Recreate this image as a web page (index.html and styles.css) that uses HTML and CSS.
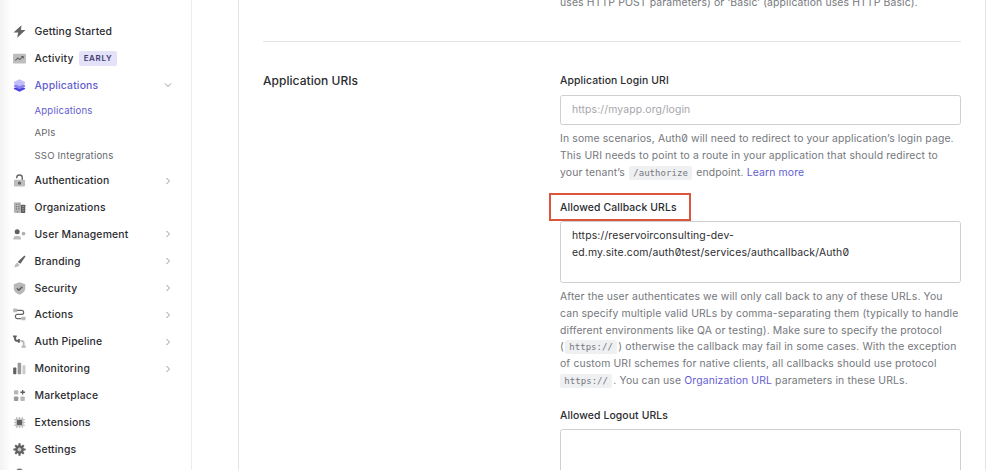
FILE: index.html
```html
<!DOCTYPE html>
<html lang="en">
<head>
<meta charset="utf-8">
<title>Application Settings</title>
<link rel="stylesheet" href="styles.css">
</head>
<body>
<div class="app">
  <nav class="sidebar">
    <a class="item"><svg class="icon" viewBox="0 0 14 14"><path d="M9.2.3.5 8.200h5L4.600 13.700 13.500 5.500H8.500z" fill="#656565"/></svg><span>Getting Started</span></a>
    <a class="item"><svg class="icon" viewBox="0 0 14 14"><rect y="2" width="14" height="10.4" rx="1" fill="#bdbdbd"/><path d="m2.5 9 2.7-2.5 2 1.6 3.6-3M8.7 4.8h2.4V7" fill="none" stroke="#666" stroke-width="1.1"/></svg><span>Activity</span><b class="badge">EARLY</b></a>
    <a class="item active"><svg class="icon" viewBox="0 0 14 14"><path d="m1 9.7 6-2 6 2v1.2L7 13.7l-6-2.8z" fill="#4b42e2"/><path d="m1 6.5 6-2 6 2v1.6L7 11 1 8.1z" fill="#8983f1"/><path d="m1 3.2 6-2.8 6 2.8v1.6L7 7.7 1 4.8z" fill="#c1bdf8"/></svg><span>Applications</span><svg class="chev" viewBox="0 0 8 8"><path d="m1 2.5 3 3 3-3"/></svg></a>
    <div class="sub">
      <a class="active">Applications</a>
      <a>APIs</a>
      <a>SSO Integrations</a>
    </div>
    <a class="item"><svg class="icon" viewBox="0 0 14 14"><path d="M4 4.500V4q0-3 3-3t3 3v2.500" fill="none" stroke="#666" stroke-width="1.5"/><rect x="1" y="6.200" width="12" height="7.300" rx="1" fill="#bdbdbd"/><circle cx="7" cy="9.800" r="1.800" fill="#666"/></svg><span>Authentication</span><svg class="chev" viewBox="0 0 8 8"><path d="m2.5 1 3 3-3 3"/></svg></a>
    <a class="item"><svg class="icon" viewBox="0 0 14 14"><path d="M1 1.5h7.5v11.3H1z" fill="#b5b5b5"/><path d="M3 3.5h1.300M5.700 3.500H7M3 6h1.300M5.700 6H7M3 8.500h1.300M5.700 8.500H7M4 11.600h1.500" stroke="#777" stroke-width="1.2"/><rect x="8.500" y="4" width="4.700" height="8.800" rx=".5" fill="#606060"/><path d="M10 6h1.700M10 8.300h1.700M10 10.600h1.700" stroke="#aaa"/></svg><span>Organizations</span></a>
    <a class="item"><svg class="icon" viewBox="0 0 14 14"><circle cx="4.500" cy="4" r="2.700" fill="#606060"/><path d="M.5 12.500V11q0-2.500 2.500-2.500h3Q8.600 8.500 8.600 11v1.500z" fill="#bdbdbd"/><circle cx="11.300" cy="6" r="2" fill="#b0b0b0"/></svg><span>User Management</span><svg class="chev" viewBox="0 0 8 8"><path d="m2.5 1 3 3-3 3"/></svg></a>
    <a class="item"><svg class="icon" viewBox="0 0 14 14"><path d="M12 .8q1.700-.5 1.200 1.200L8 9.500 5 7.600z" fill="#606060"/><path d="M4.400 8.400 7 10.300q-.5 3.200-6.300 3 1.400-.8 1.500-2.300.2-2 2.200-2.600z" fill="#bdbdbd"/></svg><span>Branding</span><svg class="chev" viewBox="0 0 8 8"><path d="m2.5 1 3 3-3 3"/></svg></a>
    <a class="item"><svg class="icon" viewBox="0 0 14 14"><path d="m7 .4 6.200 2v4.300q0 4.500-6.200 7Q.8 11.200.8 6.700V2.400z" fill="#b8b8b8"/><path d="m4.200 6.800 2 2L10 5" fill="none" stroke="#5b5b5b" stroke-width="1.5"/></svg><span>Security</span><svg class="chev" viewBox="0 0 8 8"><path d="m2.5 1 3 3-3 3"/></svg></a>
    <a class="item"><svg class="icon" viewBox="0 0 14 14"><path d="M4 2.600h5.300a2.100 2.100 0 0 1 0 4.300H4.300a2.300 2.300 0 0 0 0 4.500H9" fill="none" stroke="#666" stroke-width="1.3"/><rect x=".2" y=".6" width="4.200" height="4" rx=".7" fill="#b8b8b8"/><rect x="9" y="9.300" width="4.500" height="4" rx=".7" fill="#b8b8b8"/></svg><span>Actions</span><svg class="chev" viewBox="0 0 8 8"><path d="m2.5 1 3 3-3 3"/></svg></a>
    <a class="item"><svg class="icon" viewBox="0 0 14 14"><path d="M0 1.500h4M2.200 1v3q0 2.300 2.500 2.300H6M6.300 4.200v4.200" fill="none" stroke="#606060" stroke-width="2.1"/><path d="M7.800 6.300h1.500q2.200 0 2.200 2.500v4M9.200 12.700h4.500" fill="none" stroke="#b8b8b8" stroke-width="2"/></svg><span>Auth Pipeline</span><svg class="chev" viewBox="0 0 8 8"><path d="m2.5 1 3 3-3 3"/></svg></a>
    <a class="item"><svg class="icon" viewBox="0 0 14 14"><rect x=".2" y="6" width="3.400" height="7.300" rx=".8" fill="#606060"/><rect x="5" y=".7" width="3.800" height="12.600" rx=".8" fill="#999"/><rect x="10.200" y="3.600" width="3.200" height="9.700" rx=".8" fill="#c9c9c9"/></svg><span>Monitoring</span><svg class="chev" viewBox="0 0 8 8"><path d="m2.5 1 3 3-3 3"/></svg></a>
    <a class="item"><svg class="icon" viewBox="0 0 14 14"><rect x="1" y="1.300" width="4.700" height="4.700" rx=".8" fill="#b8b8b8"/><rect x="1" y="8.200" width="4.700" height="4.700" rx=".8" fill="#999"/><rect x="8" y="8.200" width="4.700" height="4.700" rx=".8" fill="#b8b8b8"/><path d="M10.400 1v5M7.900 3.500h5" stroke="#606060" stroke-width="1.5"/></svg><span>Marketplace</span></a>
    <a class="item"><svg class="icon" viewBox="0 0 14 14"><path d="M4 1v12M7 1v12M10 1v12M1 4h12M1 7h12M1 10h12" stroke="#bbb" stroke-width="1.2"/><rect x="2.700" y="2.700" width="8.600" height="8.600" rx="1" fill="#bdbdbd"/><rect x="4.300" y="4.300" width="5.400" height="5.400" rx=".7" fill="#606060"/></svg><span>Extensions</span></a>
    <a class="item"><svg class="icon" viewBox="0 0 14 14"><circle cx="7" cy="7" r="4.700" fill="#606060"/><path d="M7 .4v13.200M.4 7h13.200M2.400 2.400l9.200 9.200M11.600 2.400l-9.200 9.200" stroke="#606060" stroke-width="2.3"/><circle cx="7" cy="7" r="2.100" fill="#c5c5c5"/></svg><span>Settings</span></a>
    <a class="item last"><svg class="icon" viewBox="0 0 14 14"><circle cx="7" cy="5" r="4.500" fill="#777"/></svg></a>
  </nav>
  <main class="content">
    <section class="card">
      <p class="help top">uses HTTP POST parameters) or ‘Basic’ (application uses HTTP Basic).</p>
      <div class="section">
        <h2>Application URIs</h2>
        <div class="fields">
          <label class="label">Application Login URI</label>
          <div class="input placeholder">https://myapp.org/login</div>
          <p class="help note">In some scenarios, Auth0 will need to redirect to your application’s login page.<br>This URI needs to point to a route in your application that should redirect to<br>your tenant’s <code>/authorize</code> endpoint. <a>Learn more</a></p>
          <label class="label"><span class="marked">Allowed Callback URLs</span></label>
          <div class="input area">https://reservoirconsulting-dev-<br>ed.my.site.com/auth0test/services/authcallback/Auth0</div>
          <p class="help note">After the user authenticates we will only call back to any of these URLs. You<br>can specify multiple valid URLs by comma-separating them (typically to handle<br>different environments like QA or testing). Make sure to specify the protocol<br>(<code>https://</code>) otherwise the callback may fail in some cases. With the exception<br>of custom URI schemes for native clients, all callbacks should use protocol<br><code class="flush">https://</code>. You can use <a>Organization URL</a> parameters in these URLs.</p>
          <label class="label">Allowed Logout URLs</label>
          <div class="input area"></div>
        </div>
      </div>
    </section>
  </main>
</div>
</body>
</html>
```
FILE: styles.css
```css
*, *::before { box-sizing: border-box; }
body {
  margin: 0;
  height: 470px;
  overflow: hidden;
  background: #fff;
  color: #2b2c30;
  font-family: Inter, "Liberation Sans", sans-serif;
  font-feature-settings: "zero";
}
.app { display: flex; height: 470px; }
.sidebar {
  flex: none;
  width: 192px;
  height: 470px;
  overflow: hidden;
  padding: 18px 19px 0 13px;
  border-right: 1px solid #ececec;
  background: linear-gradient(90deg, #f2f2f2 0, #fff 11px);
}
.item {
  display: flex;
  align-items: center;
  height: 26.85px;
  font-size: 10.4px;
  font-weight: 500;
  letter-spacing: .17px;
  white-space: nowrap;
}
.last { align-items: flex-start; padding-top: 5px; }
.icon { flex: none; width: 13px; height: 13px; margin-right: 8.5px; }
.active { color: #635dd0; }
.badge {
  margin-left: 5.5px;
  padding: 0 4.5px;
  height: 15px;
  border-radius: 2px;
  background: #e4e2f8;
  color: #3f3b70;
  font-size: 8px;
  line-height: 15px;
  font-weight: 600;
  letter-spacing: .65px;
}
.chev { width: 8px; height: 8px; margin-left: auto; fill: none; stroke: #999; stroke-width: 1; }
.sub {
  padding: 1px 0 0 21.5px;
  font-size: 9.6px;
  letter-spacing: .18px;
  color: #65676e;
}
.sub a { display: block; height: 22.6px; line-height: 22.6px; }
.sub .active { color: #635dd0; }
.content { flex: 1; min-width: 0; padding: 0 14px 0 46px; }
.card {
  height: 470px;
  overflow: hidden;
  border: solid #e5e5e5;
  border-width: 0 1px;
  padding: 0 24px;
}
.section {
  display: grid;
  grid-template-columns: 297px minmax(0, 1fr);
  border-top: 1px solid #e5e5e5;
  padding-top: 29px;
}
h2 { margin: 0; font-size: 12px; line-height: 20px; font-weight: 500; letter-spacing: .04px; }
.help {
  margin: 0;
  font-size: 10.4px;
  line-height: 16.8px;
  letter-spacing: .135px;
  color: #75777d;
  white-space: nowrap;
}
.help a { color: #635dd0; }
.top { height: 46px; margin: -5px 0 0; padding-left: 297px; }
.label {
  display: block;
  height: 23.5px;
  font-size: 10.4px;
  line-height: 19px;
  font-weight: 500;
  letter-spacing: .12px;
}
.input {
  height: 30.5px;
  padding: 0 11px;
  border: 1px solid #cfcfd1;
  border-radius: 2.5px;
  font-size: 10.4px;
  line-height: 28.5px;
  letter-spacing: .16px;
  white-space: nowrap;
}
.placeholder { color: #a5a6aa; letter-spacing: .14px; }
.area { height: 61.5px; padding-top: 6px; line-height: 16.8px; }
.note { margin: 6.4px 0 15.8px; }
.marked { position: relative; }
.marked::before {
  content: "";
  position: absolute;
  left: -11px;
  top: -8px;
  width: 142px;
  height: 28px;
  border: 2px solid #dc563f;
}
code {
  display: inline-block;
  height: 14px;
  margin: 0 1px;
  padding: 0 4.3px;
  border-radius: 2px;
  background: #eff0f2;
  font: 9px/14px "DejaVu Sans Mono", monospace;
  letter-spacing: .05px;
}
.flush { margin-left: 0; }
```
